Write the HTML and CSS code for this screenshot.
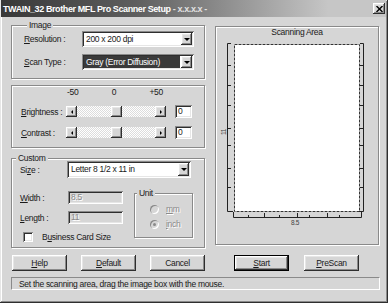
FILE: index.html
```html
<!DOCTYPE html>
<html lang="en">
<head>
    <meta charset="UTF-8">
    <title>TWAIN_32 Brother MFL Pro Scanner Setup</title>
    <link rel="stylesheet" href="styles.css">
</head>
<body>
    <div class="dialog">
        <div class="titlebar">
            <span class="title">TWAIN_32 Brother MFL Pro Scanner Setup <span class="ver">- x.x.x.x -</span></span>
            <span class="close raised">
                <svg width="7" height="6" viewBox="0 0 7 6"><path d="M0.5 0L6.5 6M6.5 0L0.5 6" stroke="#000" stroke-width="1.4"/></svg>
            </span>
        </div>

        <div class="main">
            <div class="left">
                <div class="group image-group">
                    <div class="legend">Image</div>
                    <div class="row first">
                        <span><u>R</u>esolution :</span>
                        <div class="combo sunken"><span class="value">200 x 200 dpi</span><span class="drop raised"></span></div>
                    </div>
                    <div class="row">
                        <span><u>S</u>can Type :</span>
                        <div class="combo sunken"><span class="value selected">Gray (Error Diffusion)</span><span class="drop raised"></span></div>
                    </div>
                </div>

                <div class="group level-group">
                    <div class="scale"><span>-50</span><span>0</span><span>+50</span></div>
                    <div class="slider-row">
                        <span class="slider-label"><u>B</u>rightness :</span>
                        <div class="slider">
                            <span class="arrow raised"><i class="tri-left"></i></span>
                            <span class="thumb raised"></span>
                            <span class="arrow raised"><i class="tri-right"></i></span>
                        </div>
                        <div class="edit sunken">0</div>
                    </div>
                    <div class="slider-row">
                        <span class="slider-label"><u>C</u>ontrast :</span>
                        <div class="slider">
                            <span class="arrow raised"><i class="tri-left"></i></span>
                            <span class="thumb raised"></span>
                            <span class="arrow raised"><i class="tri-right"></i></span>
                        </div>
                        <div class="edit sunken">0</div>
                    </div>
                </div>

                <div class="group custom-group">
                    <div class="legend">Custom</div>
                    <div class="size-row">
                        <span>Si<u>z</u>e :</span>
                        <div class="combo sunken tall"><span class="value">Letter 8 1/2 x 11 in</span><span class="drop raised"></span></div>
                    </div>
                    <div class="custom-grid">
                        <span><u>W</u>idth :</span>
                        <div class="edit sunken disabled wide">8.5</div>
                        <span class="row2"><u>L</u>ength :</span>
                        <div class="edit sunken disabled wide row2">11</div>
                        <div class="group unit-group">
                            <div class="legend">Unit</div>
                            <div class="radio-row first"><span class="radio"></span><span><u>m</u>m</span></div>
                            <div class="radio-row"><span class="radio checked"></span><span><u>i</u>nch</span></div>
                        </div>
                        <div class="check-row">
                            <span class="checkbox sunken"></span>
                            <span>B<u>u</u>siness Card Size</span>
                        </div>
                    </div>
                </div>
            </div>

            <div class="right">
                <div class="group scan-box">
                    <div class="scan-title">Scanning Area</div>
                    <svg class="preview" width="150" height="185" viewBox="0 0 150 185">
                        <rect x="14" y="2" width="126" height="168" fill="#fff"/>
                        <rect x="14.5" y="2.5" width="125" height="167" fill="none" stroke="#333" stroke-dasharray="3 1"/>
                        <path d="M11 1.5H7.5V169.5H13M8 23.5H11M8 43.5H11M8 63.5H11M8 86.5H11M8 103.5H11M8 126.5H11M8 145.5H11" fill="none" stroke="#222"/>
                        <path d="M140 1.5H143.5V169.5H139M140 23.5H143M140 43.5H143M140 63.5H143M140 86.5H143M140 103.5H143M140 126.5H143M140 145.5H143" fill="none" stroke="#222"/>
                        <path d="M13.5 170V175.5H141.5V170M28.5 173V175M44.5 171V175M59.5 173V175M77.5 171V175M89.5 173V175M107.5 171V175M119.5 173V175" fill="none" stroke="#222"/>
                        <text x="75" y="183" class="ruler-text" text-anchor="middle">8.5</text>
                        <text transform="translate(6,90) rotate(-90)" class="ruler-text" text-anchor="middle">11</text>
                    </svg>
                </div>
            </div>
        </div>

        <div class="buttons">
            <div class="button-set left-set">
                <span class="button raised"><u>H</u>elp</span>
                <span class="button raised"><u>D</u>efault</span>
                <span class="button raised">Cancel</span>
            </div>
            <div class="button-set right-set">
                <span class="button raised default"><u>S</u>tart</span>
                <span class="button raised"><u>P</u>reScan</span>
            </div>
        </div>

        <div class="status">Set the scanning area, drag the image box with the mouse.</div>
    </div>
</body>
</html>
```

FILE: styles.css
```css
* {
    box-sizing: border-box;
}

body {
    margin: 0;
    background-color: #d6d6d6;
    font-family: "Liberation Sans", Arial, sans-serif;
    font-size: 8.5px;
    letter-spacing: -0.3px;
    color: #1a1a1a;
}

u {
    text-decoration-thickness: 1px;
    text-underline-offset: 1px;
}

.raised {
    background-color: #d6d6d6;
    box-shadow: inset -1px -1px #2e2e2e, inset 1px 1px #fff, inset -2px -2px #8a8a8a, inset 2px 2px #e6e6e6;
}

.sunken {
    background-color: #fff;
    box-shadow: inset 1px 1px #8a8a8a, inset -1px -1px #fff, inset 2px 2px #2e2e2e, inset -2px -2px #e6e6e6;
}

.dialog {
    width: 388px;
    height: 303px;
    background-color: #d6d6d6;
    box-shadow: inset -1px -1px #2e2e2e, inset 1px 1px #e6e6e6, inset -2px -2px #8a8a8a, inset 2px 2px #fff;
    overflow: hidden;
}

/* title bar */
.titlebar {
    height: 17px;
    margin: 0 2px 0 1px;
    padding: 0 1px 0 2px;
    display: flex;
    align-items: center;
    justify-content: space-between;
    background: linear-gradient(to right, #383838, #5e5e5e 35%, #c6c6c6 85%);
}

.title {
    color: #fff;
    font-weight: bold;
    font-size: 9px;
    letter-spacing: -0.4px;
    white-space: nowrap;
}

.title .ver {
    color: #e2e2e2;
}

.close {
    width: 12px;
    height: 11px;
    display: flex;
    align-items: center;
    justify-content: center;
}

/* layout */
.main {
    display: grid;
    grid-template-columns: 194px 164px;
    column-gap: 10px;
    padding-left: 11px;
}

.left {
    display: flex;
    flex-direction: column;
}

.group {
    border: 1px solid #8a8a8a;
    box-shadow: inset 1px 1px #fff, 1px 1px #fff;
}

.legend {
    display: table;
    margin: -6px 0 0 3px;
    padding: 0 2px;
    line-height: 10px;
    background-color: #d6d6d6;
}

/* image group */
.image-group {
    margin-top: 8px;
    padding: 0 0 8px 12px;
}

.image-group .row {
    display: flex;
    align-items: center;
    height: 16px;
    margin-top: 7px;
}

.image-group .row.first {
    margin-top: 1px;
}

.image-group .row > span {
    width: 58px;
}

.combo {
    width: 112px;
    height: 16px;
    padding: 2px;
    display: flex;
    align-items: stretch;
}

.combo.tall {
    width: 124px;
    height: 17px;
}

.combo .value {
    flex: 1;
    margin-right: 1px;
    padding-left: 2px;
    line-height: 12px;
    white-space: nowrap;
    overflow: hidden;
}

.combo .value.selected {
    background-color: #3a3a3a;
    color: #fff;
}

.drop {
    width: 11px;
    display: flex;
    align-items: center;
    justify-content: center;
}

.drop::after {
    content: "";
    border-left: 3px solid transparent;
    border-right: 3px solid transparent;
    border-top: 3px solid #000;
}

/* brightness / contrast */
.level-group {
    margin-top: 6px;
    padding: 1px 0 8px 9px;
}

.scale {
    width: 96px;
    margin-left: 46px;
    height: 10px;
    line-height: 10px;
    display: flex;
    justify-content: space-between;
}

.slider-row {
    display: flex;
    align-items: center;
    height: 13px;
    margin-top: 8px;
}

.slider-label {
    width: 45px;
}

.slider {
    width: 100px;
    height: 11px;
    display: flex;
    justify-content: space-between;
    background: repeating-conic-gradient(#fff 0 25%, #dcdcdc 0 50%) 0 0 / 2px 2px;
}

.slider .arrow {
    width: 11px;
    display: flex;
    align-items: center;
    justify-content: center;
}

.slider .thumb {
    width: 11px;
}

.tri-left {
    border-top: 2px solid transparent;
    border-bottom: 2px solid transparent;
    border-right: 2px solid #000;
}

.tri-right {
    border-top: 2px solid transparent;
    border-bottom: 2px solid transparent;
    border-left: 2px solid #000;
}

.edit {
    width: 17px;
    height: 13px;
    margin-left: 9px;
    padding-left: 3px;
    line-height: 13px;
}

.edit.wide {
    width: 55px;
    margin-left: 0;
}

.edit.disabled {
    background-color: #d6d6d6;
    color: #8a8a8a;
    text-shadow: 1px 1px #fff;
}

/* custom group */
.custom-group {
    margin-top: 10px;
    padding: 0 0 5px 8px;
}

.custom-group > .legend {
    margin-left: -4px;
    margin-bottom: -2px;
}

.size-row {
    display: flex;
    align-items: center;
}

.size-row > span {
    width: 47px;
}

.custom-grid {
    margin-top: 13px;
    display: grid;
    grid-template-columns: 48px 66px 59px;
    grid-template-rows: 13px 13px 11px;
    row-gap: 7px;
    align-items: center;
}

.custom-grid .row2 {
    grid-row: 2;
}

.unit-group {
    grid-column: 3;
    grid-row: 1 / span 3;
    align-self: start;
    height: 45px;
    margin-top: 2px;
    padding-left: 15px;
    color: #8a8a8a;
    text-shadow: 1px 1px #fff;
}

.unit-group .legend {
    margin-left: -13px;
    color: #1a1a1a;
    text-shadow: none;
}

.radio-row {
    display: flex;
    align-items: center;
    gap: 7px;
    height: 10px;
    margin-top: 5px;
}

.radio-row.first {
    margin-top: 6px;
}

.radio {
    width: 9px;
    height: 9px;
    border-radius: 50%;
    background-color: #d6d6d6;
    box-shadow: inset 1px 1px #8a8a8a, inset -1px -1px #fff;
    display: flex;
    align-items: center;
    justify-content: center;
}

.radio.checked::after {
    content: "";
    width: 3px;
    height: 3px;
    border-radius: 50%;
    background-color: #8a8a8a;
}

.check-row {
    grid-column: 1 / span 2;
    grid-row: 3;
    display: flex;
    align-items: center;
    gap: 9px;
    padding-left: 3px;
}

.checkbox {
    width: 10px;
    height: 10px;
}

/* scanning area */
.scan-box {
    margin-top: 9px;
    height: 219px;
}

.scan-title {
    text-align: center;
    line-height: 10px;
}

.preview {
    display: block;
    margin: 5px 0 0 4px;
}

.ruler-text {
    font-family: "Liberation Sans", Arial, sans-serif;
    font-size: 6.5px;
    fill: #444;
}

/* buttons */
.buttons {
    display: grid;
    grid-template-columns: 194px 164px;
    column-gap: 10px;
    margin-top: 7px;
    padding-left: 11px;
}

.button-set {
    display: flex;
}

.left-set {
    justify-content: space-between;
    padding-left: 1px;
}

.right-set {
    gap: 15px;
    padding-left: 19px;
}

.button {
    width: 55px;
    height: 16px;
    display: flex;
    align-items: center;
    justify-content: center;
}

.button.default {
    border: 1px solid #000;
}

.status {
    width: 369px;
    height: 13px;
    margin: 6px 0 0 11px;
    padding-left: 7px;
    line-height: 12px;
    border-top: 1px solid #8a8a8a;
    border-left: 1px solid #8a8a8a;
    border-bottom: 1px solid #fff;
    border-right: 1px solid #fff;
}
```
